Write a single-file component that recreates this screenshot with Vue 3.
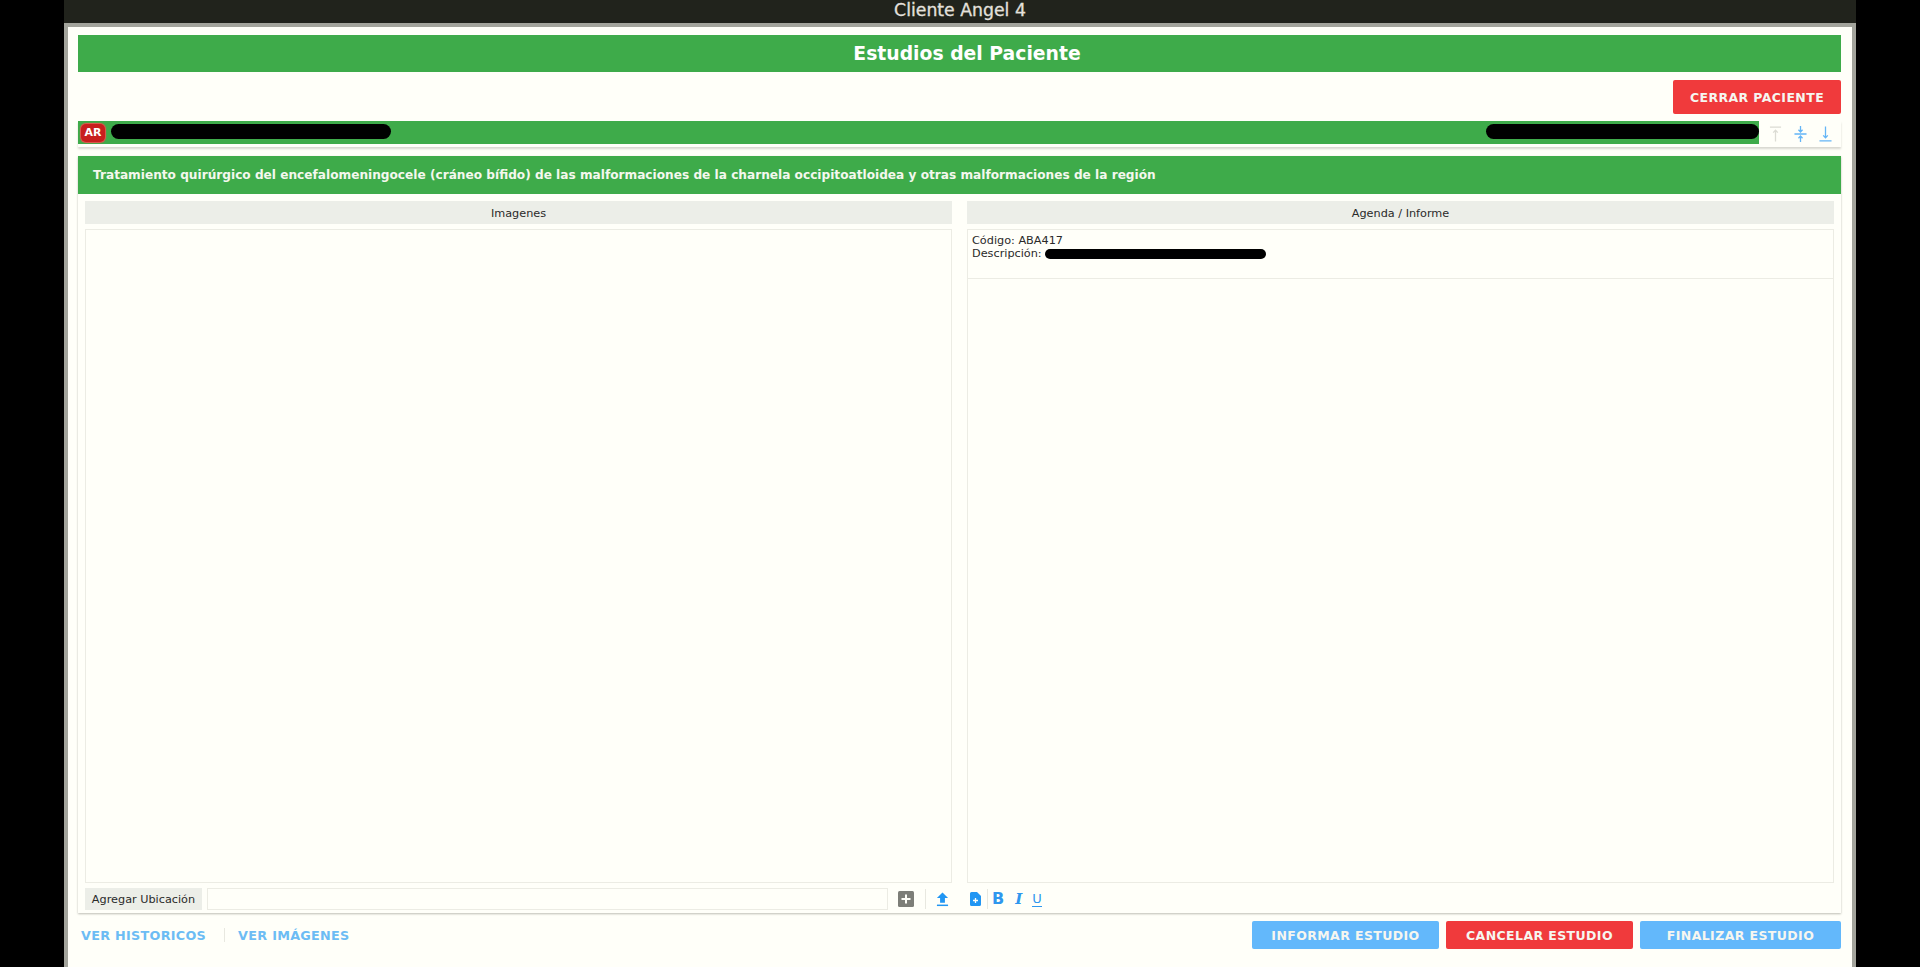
<template>
  <div class="screen">
    <div class="titlebar">Cliente Angel 4</div>
    <div class="window">
      <div class="page-title">Estudios del Paciente</div>

      <div class="actions-top">
        <button class="btn btn-red btn-close">CERRAR PACIENTE</button>
      </div>

      <!-- Patient row, the personal data is blacked out -->
      <div class="patient-card">
        <div class="patient-bar">
          <span class="badge">AR</span>
          <span class="redacted name"></span>
          <span class="redacted meta"></span>
        </div>
        <div class="patient-tools">
          <svg class="tool faded" viewBox="0 0 14 18">
            <path d="M1 1.5h12M7 5v12M4.5 7.5 7 5l2.5 2.5" />
          </svg>
          <svg class="tool" viewBox="0 0 14 18">
            <path d="M0.5 9h13M7 0.5v6M4.8 4.5 7 6.8l2.2-2.3M7 17.5v-6M4.8 13.5 7 11.2l2.2 2.3" />
          </svg>
          <svg class="tool" viewBox="0 0 14 18">
            <path d="M0.5 16.5h13M7 1v12M4.5 10.5 7 13l2.5-2.5" />
          </svg>
        </div>
      </div>

      <div class="study">
        <div class="study-title">
          Tratamiento quirúrgico del encefalomeningocele (cráneo bífido) de las malformaciones de la charnela occipitoatloidea y otras malformaciones de la región
        </div>
        <div class="study-body">
          <section class="col">
            <div class="col-head">Imagenes</div>
            <div class="box"></div>
            <div class="col-foot">
              <button class="add-location">Agregar Ubicación</button>
              <input class="location-input" type="text" />
              <svg class="plus" viewBox="0 0 16 16">
                <rect width="16" height="16" rx="1.5" fill="#7d7e78" />
                <path d="M8 3.5v9M3.5 8h9" stroke="#fffff9" stroke-width="2" />
              </svg>
              <span class="sep"></span>
              <svg class="upload" viewBox="0 0 14 16">
                <path d="M7 1 13 7H9.6v5H4.4V7H1z" fill="#2196f3" />
                <path d="M1 14.8h12" stroke="#2196f3" stroke-width="1.6" />
              </svg>
            </div>
          </section>

          <section class="col">
            <div class="col-head">Agenda / Informe</div>
            <div class="box box-report">
              <div class="report-info">
                <div>Código: ABA417</div>
                <div class="desc">Descripción:<span class="redacted desc-value"></span></div>
              </div>
            </div>
            <div class="col-foot editor">
              <svg class="doc" viewBox="0 0 11 14">
                <path d="M1.5 0H7l4 4v8.5a1.5 1.5 0 0 1-1.5 1.5h-8A1.5 1.5 0 0 1 0 12.500V1.500A1.500 1.500 0 0 1 1.500 0z" fill="#2196f3" />
                <path d="M5.500 6v5M3 8.500h5" stroke="#fffff9" stroke-width="1.300" />
              </svg>
              <span class="sep sep-editor"></span>
              <span class="fmt fmt-b">B</span>
              <span class="fmt fmt-i">I</span>
              <span class="fmt fmt-u">U</span>
            </div>
          </section>
        </div>
      </div>

      <div class="bottom">
        <a class="link">VER HISTORICOS</a>
        <span class="link-sep"></span>
        <a class="link">VER IMÁGENES</a>
        <div class="bottom-buttons">
          <button class="btn btn-blue w-inform">INFORMAR ESTUDIO</button>
          <button class="btn btn-red w-cancel">CANCELAR ESTUDIO</button>
          <button class="btn btn-blue w-finish">FINALIZAR ESTUDIO</button>
        </div>
      </div>
    </div>
  </div>
</template>

<script setup>
</script>

<style>
html,
body {
  margin: 0;
  background: #000;
}
</style>

<style scoped>
.screen {
  height: 967px;
  margin: 0 64px;
  overflow: hidden;
  display: flex;
  flex-direction: column;
  font-family: "DejaVu Sans", sans-serif;
  color: #2a2a2a;
}

.titlebar {
  height: 23px;
  flex: none;
  background: #21231c;
  color: #e4e0dc;
  font-size: 17.3px;
  line-height: 20px;
  text-align: center;
  -webkit-text-stroke: 0.3px #e4e0dc;
}

.window {
  flex: 1;
  min-height: 0;
  background: #fffff9;
  border: 4px solid #a3a49c;
  border-bottom: none;
  padding: 8px 11px 0 10px;
}

.page-title {
  height: 37px;
  background: #3eab4a;
  color: #fff;
  font-size: 18.8px;
  font-weight: 700;
  line-height: 38px;
  text-align: center;
  padding-left: 15px;
  box-sizing: border-box;
}

.actions-top {
  display: flex;
  justify-content: flex-end;
  margin-top: 8px;
}

.btn {
  height: 28px;
  border: none;
  border-radius: 2px;
  padding: 0;
  color: #f6f6f0;
  font-family: "DejaVu Sans", sans-serif;
  font-size: 12.5px;
  font-weight: 700;
  letter-spacing: 0.4px;
}

.btn-red {
  background: #f03a3c;
}

.btn-blue {
  background: #63b8fb;
}

.btn-close {
  width: 168px;
  height: 34px;
}

.patient-card {
  display: flex;
  height: 26px;
  margin-top: 7px;
  box-shadow: 0 2px 2px #d8d8d0;
}

.patient-bar {
  flex: 1;
  height: 23px;
  background: #3eab4a;
  display: flex;
  align-items: center;
  padding-left: 3px;
}

.badge {
  width: 24px;
  height: 18px;
  background: #c81e1e;
  border-radius: 5px;
  box-shadow: 0 0 1px 1px #e8504c;
  color: #fff;
  font-size: 11px;
  font-weight: 700;
  line-height: 18px;
  text-align: center;
}

.redacted {
  display: inline-block;
  background: #000;
  border-radius: 8px;
}

.name {
  width: 280px;
  height: 15px;
  margin: -3px 0 0 6px;
}

.meta {
  width: 273px;
  height: 15px;
  margin: -3px 0 0 auto;
}

.patient-tools {
  width: 82px;
  display: flex;
  align-items: flex-start;
  gap: 12px;
  padding: 4px 0 0 10px;
  box-sizing: border-box;
}

.tool {
  width: 13px;
  height: 18px;
  fill: none;
  stroke: #64b5f6;
  stroke-width: 1.4;
}

.tool.faded {
  stroke: #dcdcd4;
}

.study {
  margin-top: 9px;
  height: 757px;
  display: flex;
  flex-direction: column;
  box-shadow: 0 1px 2px #bdbdb5;
}

.study-title {
  height: 38px;
  flex: none;
  background: #3eab4a;
  color: #f4f8ee;
  font-size: 12.15px;
  font-weight: 700;
  line-height: 39px;
  padding-left: 15px;
}

.study-body {
  flex: 1;
  min-height: 0;
  display: grid;
  grid-template-columns: 867px 867px;
  gap: 15px;
  padding: 7px 7px 3px;
}

.col {
  display: flex;
  flex-direction: column;
  min-height: 0;
}

.col-head {
  height: 23px;
  flex: none;
  background: #eceee8;
  font-size: 11.25px;
  line-height: 25px;
  text-align: center;
}

.box {
  flex: 1;
  margin-top: 5px;
  border: 1px solid #ecece4;
}

.report-info {
  height: 44px;
  padding: 4px 4px 0;
  border-bottom: 1px solid #ecece4;
  font-size: 11.25px;
  line-height: 13px;
}

.desc {
  display: flex;
  align-items: center;
  white-space: pre;
}

.desc-value {
  width: 221px;
  height: 10px;
  margin-left: 3px;
}

.col-foot {
  height: 22px;
  flex: none;
  margin-top: 5px;
  display: flex;
  align-items: center;
}

.add-location {
  width: 117px;
  height: 22px;
  border: none;
  padding: 0;
  background: #eceee8;
  color: #2a2a2a;
  font-family: "DejaVu Sans", sans-serif;
  font-size: 11.25px;
}

.location-input {
  width: 681px;
  height: 22px;
  box-sizing: border-box;
  margin-left: 5px;
  border: 1px solid #ecece4;
  background: transparent;
}

.plus {
  width: 16px;
  height: 16px;
  margin-left: 10px;
}

.sep {
  width: 1px;
  height: 20px;
  margin-left: 11px;
  background: #e8e8e0;
}

.upload {
  width: 13px;
  height: 16px;
  margin-left: 10px;
}

.editor {
  padding-left: 3px;
}

.doc {
  width: 11px;
  height: 14px;
}

.sep-editor {
  margin-left: 6px;
}

.fmt {
  color: #2f97ee;
  line-height: 18px;
}

.fmt-b {
  margin-left: 4px;
  font-size: 16px;
  font-weight: 700;
}

.fmt-i {
  margin-left: 11px;
  font-family: "DejaVu Serif", serif;
  font-size: 15px;
  font-weight: 700;
  font-style: italic;
}

.fmt-u {
  margin-left: 10px;
  font-size: 13px;
  line-height: 14px;
  border-bottom: 1.5px solid #2f97ee;
}

.bottom {
  display: flex;
  align-items: center;
  margin-top: 8px;
  height: 28px;
  padding-left: 3px;
}

.link {
  color: #6cbcf4;
  font-size: 12.75px;
  font-weight: 700;
  letter-spacing: 0.3px;
}

.link-sep {
  width: 1px;
  height: 14px;
  margin: 0 13px 0 18px;
  background: #e8e8e0;
}

.bottom-buttons {
  margin-left: auto;
  display: flex;
  gap: 7px;
}

.w-inform {
  width: 187px;
}

.w-cancel {
  width: 187px;
}

.w-finish {
  width: 201px;
}
</style>
